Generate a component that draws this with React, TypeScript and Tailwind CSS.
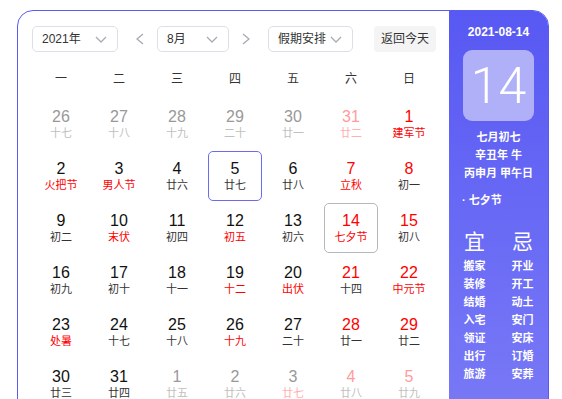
import React from 'react';

type Cell = { d: number; l: string; nc: string; lc: string; box?: 'sel' | 'today' };

const K = 'text-[#111]';
const L = 'text-[#333]';
const R = 'text-[#ff0000]';
const GN = 'text-[#999]';
const GL = 'text-[#c0c0c0]';
const PN = 'text-[#ff9c9c]';
const PL = 'text-[#ffb0b0]';

const cells: Cell[] = [
  { d: 26, l: '十七', nc: GN, lc: GL },
  { d: 27, l: '十八', nc: GN, lc: GL },
  { d: 28, l: '十九', nc: GN, lc: GL },
  { d: 29, l: '二十', nc: GN, lc: GL },
  { d: 30, l: '廿一', nc: GN, lc: GL },
  { d: 31, l: '廿二', nc: PN, lc: PL },
  { d: 1, l: '建军节', nc: R, lc: R },

  { d: 2, l: '火把节', nc: K, lc: R },
  { d: 3, l: '男人节', nc: K, lc: R },
  { d: 4, l: '廿六', nc: K, lc: L },
  { d: 5, l: '廿七', nc: K, lc: L, box: 'sel' },
  { d: 6, l: '廿八', nc: K, lc: L },
  { d: 7, l: '立秋', nc: R, lc: R },
  { d: 8, l: '初一', nc: R, lc: L },

  { d: 9, l: '初二', nc: K, lc: L },
  { d: 10, l: '末伏', nc: K, lc: R },
  { d: 11, l: '初四', nc: K, lc: L },
  { d: 12, l: '初五', nc: K, lc: R },
  { d: 13, l: '初六', nc: K, lc: L },
  { d: 14, l: '七夕节', nc: R, lc: R, box: 'today' },
  { d: 15, l: '初八', nc: R, lc: L },

  { d: 16, l: '初九', nc: K, lc: L },
  { d: 17, l: '初十', nc: K, lc: L },
  { d: 18, l: '十一', nc: K, lc: L },
  { d: 19, l: '十二', nc: K, lc: R },
  { d: 20, l: '出伏', nc: K, lc: R },
  { d: 21, l: '十四', nc: R, lc: L },
  { d: 22, l: '中元节', nc: R, lc: R },

  { d: 23, l: '处暑', nc: K, lc: R },
  { d: 24, l: '十七', nc: K, lc: L },
  { d: 25, l: '十八', nc: K, lc: L },
  { d: 26, l: '十九', nc: K, lc: R },
  { d: 27, l: '二十', nc: K, lc: L },
  { d: 28, l: '廿一', nc: R, lc: L },
  { d: 29, l: '廿二', nc: R, lc: L },

  { d: 30, l: '廿三', nc: K, lc: L },
  { d: 31, l: '廿四', nc: K, lc: L },
  { d: 1, l: '廿五', nc: GN, lc: GL },
  { d: 2, l: '廿六', nc: GN, lc: GL },
  { d: 3, l: '廿七', nc: GN, lc: PL },
  { d: 4, l: '廿八', nc: PN, lc: GL },
  { d: 5, l: '廿九', nc: PN, lc: GL },
];

const weekdays = ['一', '二', '三', '四', '五', '六', '日'];
const yi = ['搬家', '装修', '结婚', '入宅', '领证', '出行', '旅游'];
const ji = ['开业', '开工', '动土', '安门', '安床', '订婚', '安葬'];

const Chevron = () => (
  <svg width="12" height="7" viewBox="0 0 12 7" fill="none">
    <polyline points="1,1 6,6 11,1" stroke="#a8abb2" strokeWidth="1.3" />
  </svg>
);

const Arrow = ({ dir }: { dir: 'l' | 'r' }) => (
  <svg width="8" height="12" viewBox="0 0 8 12" fill="none">
    <polyline points={dir === 'l' ? '7,1 1,6 7,11' : '1,1 7,6 1,11'} stroke="#a8abb2" strokeWidth="1.4" />
  </svg>
);

const Select = ({ label, w }: { label: string; w: string }) => (
  <div className={`${w} h-[26px] border border-[#dcdfe6] rounded-[5px] flex items-center justify-between pl-[9px] pr-[10px] text-[12px] text-[#333]`}>
    <span>{label}</span>
    <Chevron />
  </div>
);

const App = () => {
  return (
    <div className="w-[562px] h-[399px] overflow-hidden bg-white font-['Liberation_Sans','Noto_Sans_CJK_SC',sans-serif]">
      <div className="ml-[17px] mt-[10px] w-[532px] h-[420px] border border-[#5b5bf3] rounded-t-[16px] overflow-hidden flex">
        {/* Calendar */}
        <div className="w-[431px] pl-[14px] pt-[15px]">
          <div className="flex items-center h-[26px]">
            <Select label="2021年" w="w-[86px]" />
            <span className="ml-[18px] flex"><Arrow dir="l" /></span>
            <div className="ml-[13px]"><Select label="8月" w="w-[72px]" /></div>
            <span className="ml-[13px] flex"><Arrow dir="r" /></span>
            <div className="ml-[18px]"><Select label="假期安排" w="w-[85px]" /></div>
            <div className="ml-[21px] w-[62px] h-[26px] rounded-[4px] bg-[#f4f4f5] flex items-center justify-center text-[12px] text-[#333]">
              返回今天
            </div>
          </div>

          <div className="mt-[8px] grid grid-cols-7 w-[406px] h-[38px] items-center">
            {weekdays.map((w) => (
              <div key={w} className="text-center text-[12px] text-[#333]">{w}</div>
            ))}
          </div>

          <div className="grid grid-cols-7 w-[406px] gap-y-[2px] mt-px">
            {cells.map((c, i) => (
              <div
                key={i}
                className={`mx-auto w-[54px] h-[50px] rounded-[5px] flex flex-col items-center justify-center border ${
                  c.box === 'sel' ? 'border-[#6b6bf2]' : c.box === 'today' ? 'border-[#b8b8b8]' : 'border-transparent'
                }`}
              >
                <span className={`text-[16px] leading-[18px] ${c.nc}`}>{c.d}</span>
                <span className={`text-[11px] leading-[14px] ${c.lc}`}>{c.l}</span>
              </div>
            ))}
          </div>
        </div>

        {/* Side panel */}
        <div className="w-[99px] bg-gradient-to-b from-[#5858f3] to-[#7a7af6] text-white flex flex-col items-center">
          <div className="mt-[14px] text-[12px] font-bold leading-[14px]">2021-08-14</div>
          <div className="mt-[11px] w-[71px] h-[71px] rounded-[9px] bg-[#b0b0f9] flex items-center justify-center">
            <span className="text-[50px] leading-none font-light font-['Roboto',sans-serif]">14</span>
          </div>
          <div className="mt-[7px] text-[11px] font-bold leading-[18px] text-center">
            <div>七月初七</div>
            <div>辛丑年 牛</div>
            <div>丙申月 甲午日</div>
          </div>
          <div className="mt-[11px] self-start pl-[13px] text-[11px] font-bold leading-[14px]">· 七夕节</div>
          <div className="mt-[23px] w-full flex justify-center gap-[26px]">
            <div className="flex flex-col items-center">
              <span className="text-[21px] leading-[24px]">宜</span>
              <div className="mt-[3px] flex flex-col items-center text-[11px] font-bold leading-[18px]">
                {yi.map((t) => <span key={t}>{t}</span>)}
              </div>
            </div>
            <div className="flex flex-col items-center">
              <span className="text-[21px] leading-[24px]">忌</span>
              <div className="mt-[3px] flex flex-col items-center text-[11px] font-bold leading-[18px]">
                {ji.map((t) => <span key={t}>{t}</span>)}
              </div>
            </div>
          </div>
        </div>
      </div>
    </div>
  );
};

export default App;
